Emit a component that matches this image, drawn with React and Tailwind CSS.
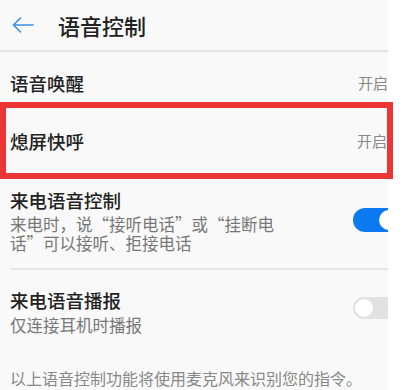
import React from 'react';

const Toggle = ({ on }) => (
  <div className="w-[35px] h-[24px] overflow-hidden shrink-0">
    {on ? (
      <div className="w-[48px] h-[24px] rounded-full bg-[#0b79ef] flex items-center justify-end pr-[2px]">
        <div className="w-[20px] h-[20px] rounded-full bg-white" />
      </div>
    ) : (
      <div className="w-[48px] h-[22px] rounded-full bg-[#e1e1e1] flex items-center pl-[2px]">
        <div className="w-[18px] h-[18px] rounded-full bg-white" />
      </div>
    )}
  </div>
);

export default function App() {
  return (
    <div className="w-[402px] h-[390px] bg-white overflow-hidden font-['Noto_Sans_CJK_SC',sans-serif]">
      <div className="w-[388px] h-full bg-[#f9f9f9]">
        {/* header */}
        <div className="h-[50px] flex items-center pl-[12px]">
          <svg width="22" height="16" viewBox="0 0 22 16" fill="none" stroke="#3d8fe8" strokeWidth="1.6" strokeLinecap="round" strokeLinejoin="round">
            <path d="M21 8H1.5M8.5 1L1.5 8l7 7" />
          </svg>
          <span className="ml-[24px] text-[22px] leading-[28px] font-medium text-[#222]">语音控制</span>
        </div>
        <div className="h-[2px] bg-[#e4e4e4]" />

        {/* 语音唤醒 */}
        <div className="h-[50px] pt-[12px] pl-[10px] flex items-center justify-between">
          <span className="text-[18.5px] leading-[24px] font-medium text-[#222]">语音唤醒</span>
          <span className="text-[15px] leading-[20px] text-[#888]">开启</span>
        </div>

        {/* highlighted row */}
        <div className="w-[393px] h-[77px] border-[6px] border-[#ee3535] pl-[4px] flex items-center justify-between">
          <span className="text-[18.5px] leading-[24px] font-medium text-[#222]">熄屏快呼</span>
          <span className="text-[15px] leading-[20px] text-[#888]">开启</span>
        </div>

        {/* 来电语音控制 */}
        <div className="h-[89px] pt-[9px] pl-[10px] flex justify-between">
          <div>
            <div className="text-[18.5px] leading-[24px] font-medium text-[#222]">来电语音控制</div>
            <div className="mt-[3px] w-[266px] text-[16.5px] leading-[19px] text-[#777]">
              来电时，说“接听电话”或“挂断电话”可以接听、拒接电话
            </div>
          </div>
          <div className="pt-[20px]">
            <Toggle on />
          </div>
        </div>
        <div className="ml-[10px] h-[2px] bg-[#e6e6e6]" />

        {/* 来电语音播报 */}
        <div className="h-[98px] pt-[18px] pl-[10px] flex justify-between">
          <div>
            <div className="text-[18.5px] leading-[24px] font-medium text-[#222]">来电语音播报</div>
            <div className="mt-[4px] text-[16.5px] leading-[19px] text-[#777]">仅连接耳机时播报</div>
          </div>
          <div className="pt-[9px]">
            <Toggle />
          </div>
        </div>

        <div className="pl-[10px] text-[16px] leading-[20px] text-[#888] whitespace-nowrap">
          以上语音控制功能将使用麦克风来识别您的指令。
        </div>
      </div>
    </div>
  );
}
